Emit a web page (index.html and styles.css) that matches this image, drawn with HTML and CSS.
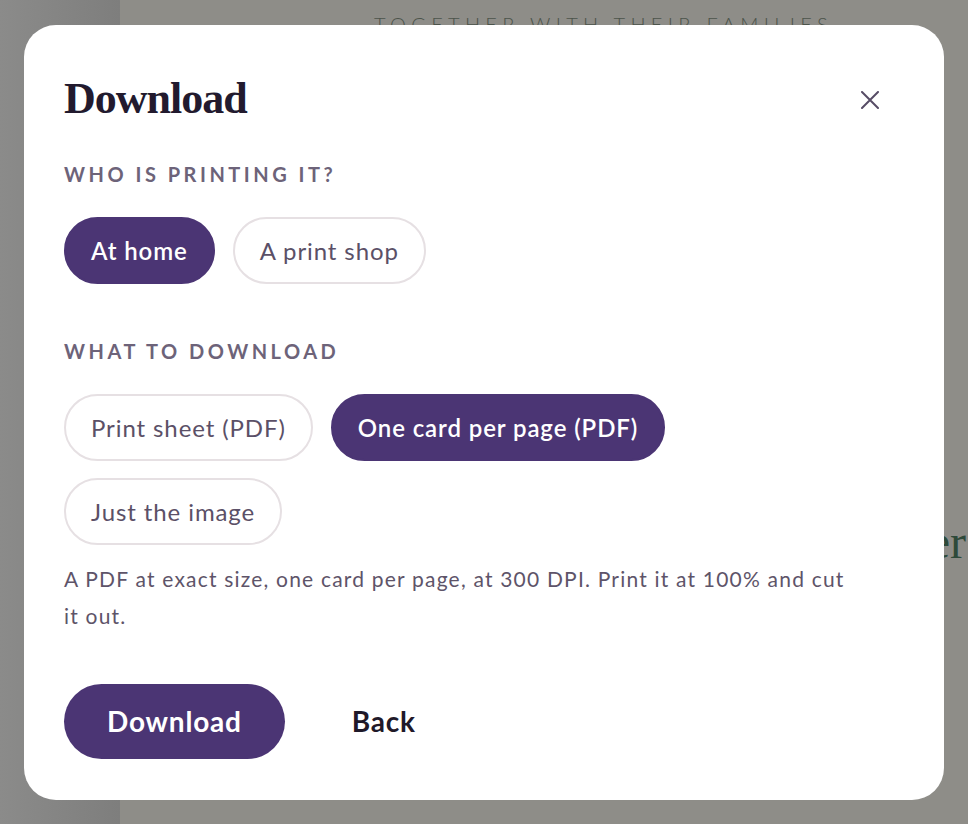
FILE: index.html
```html
<!DOCTYPE html>
<html lang="en">
<head>
<meta charset="UTF-8">
<title>Download</title>
<meta name="viewport" content="width=device-width, initial-scale=1.0">
<link rel="stylesheet" href="styles.css">
</head>
<body>
<!-- page behind the dialog -->
<div class="page">
  <aside class="side"></aside>
  <main class="canvas">
    <div class="invite-top">TOGETHER WITH THEIR FAMILIES</div>
    <div class="invite-names">Eleanor &amp; Peter</div>
  </main>
</div>

<!-- download dialog -->
<div class="overlay">
  <div class="dialog">
    <div class="dialog-head">
      <h2>Download</h2>
      <button class="close-btn" aria-label="Close">
        <svg width="18" height="18" viewBox="0 0 18 18"><path d="M1 1L17 17M17 1L1 17" stroke="#574c66" stroke-width="2" stroke-linecap="round"/></svg>
      </button>
    </div>

    <div class="group">
      <div class="group-label">Who is printing it?</div>
      <div class="pills">
        <button class="pill active">At home</button>
        <button class="pill">A print shop</button>
      </div>
    </div>

    <div class="group">
      <div class="group-label">What to download</div>
      <div class="pills">
        <button class="pill">Print sheet (PDF)</button>
        <button class="pill active">One card per page (PDF)</button>
        <button class="pill">Just the image</button>
      </div>
      <p class="hint">A PDF at exact size, one card per page, at 300 DPI. Print it at 100% and cut it out.</p>
    </div>

    <div class="actions">
      <button class="btn-primary">Download</button>
      <button class="btn-text">Back</button>
    </div>
  </div>
</div>
</body>
</html>
```

FILE: styles.css
```css
html, body {
margin: 0;
padding: 0;
height: 100%;
overflow: hidden;
}
body {
font-family: "Lato", "Open Sans", Arial, sans-serif;
background: #8e8d88;
}
button {
font-family: inherit;
cursor: pointer;
}

/* 背後頁面 */
.page {
display: flex;
height: 100vh;
}
.side {
width: 120px;
flex-shrink: 0;
background: linear-gradient(90deg, #8b8b8a 0%, #7e7e7d 100%);
}
.canvas {
flex: 1;
min-width: 0;
background: #8e8d88;
}
.invite-top {
padding: 12px 0 0 254px;
font-size: 20px;
line-height: 24px;
letter-spacing: 5.3px;
color: #4c544b;
font-weight: 300;
}
.invite-names {
margin-top: 478px;
margin-right: 2px;
text-align: right;
white-space: nowrap;
font-family: "Liberation Serif", "DejaVu Serif", serif;
font-size: 48px;
line-height: 56px;
color: #2e4a3a;
}

/* 對話框 */
.overlay {
position: fixed;
top: 0; left: 0; right: 0; bottom: 0;
display: flex;
align-items: center;
justify-content: center;
}
.dialog {
width: 920px;
box-sizing: border-box;
padding: 48px 40px 41px 40px;
background: #fff;
border-radius: 32px;
}
.dialog-head {
display: flex;
align-items: center;
justify-content: space-between;
margin-bottom: 37px;
}
.dialog-head h2 {
margin: 0;
font-family: "Liberation Serif", "Times New Roman", serif;
font-weight: 700;
font-size: 44px;
line-height: 52px;
letter-spacing: -1px;
color: #221a2e;
}
.close-btn {
background: none;
border: none;
padding: 8px;
margin: 2px 17px 0 0;
display: flex;
}

.group-label {
font-size: 20px;
line-height: 24px;
font-weight: 700;
text-transform: uppercase;
letter-spacing: 3.5px;
color: #6d6379;
margin-bottom: 31px;
}
.group + .group {
margin-top: 55px;
}
.pills {
display: flex;
flex-wrap: wrap;
gap: 17px 18px;
max-width: 640px;
}
.pill {
background: #fff;
border: 2px solid #e6e0e3;
border-radius: 40px;
padding: 17px 25px;
font-size: 24px;
line-height: 29px;
letter-spacing: 0.9px;
color: #5b5067;
}
.pill.active {
background: #4b3574;
border-color: #4b3574;
color: #fff;
font-weight: 600;
}
.hint {
margin: 15px 0 0 0;
max-width: 800px;
font-size: 21px;
line-height: 37px;
letter-spacing: 1.2px;
color: #5e5469;
}

.actions {
display: flex;
align-items: center;
gap: 24px;
margin-top: 50px;
}
.btn-primary {
background: #4b3574;
color: #fff;
border: none;
border-radius: 40px;
padding: 21px 43px;
font-size: 28px;
line-height: 33px;
font-weight: 700;
letter-spacing: 0.8px;
}
.btn-text {
background: none;
border: none;
padding: 21px 43px;
font-size: 28px;
line-height: 33px;
font-weight: 700;
letter-spacing: 0.8px;
color: #1f1929;
}
```
